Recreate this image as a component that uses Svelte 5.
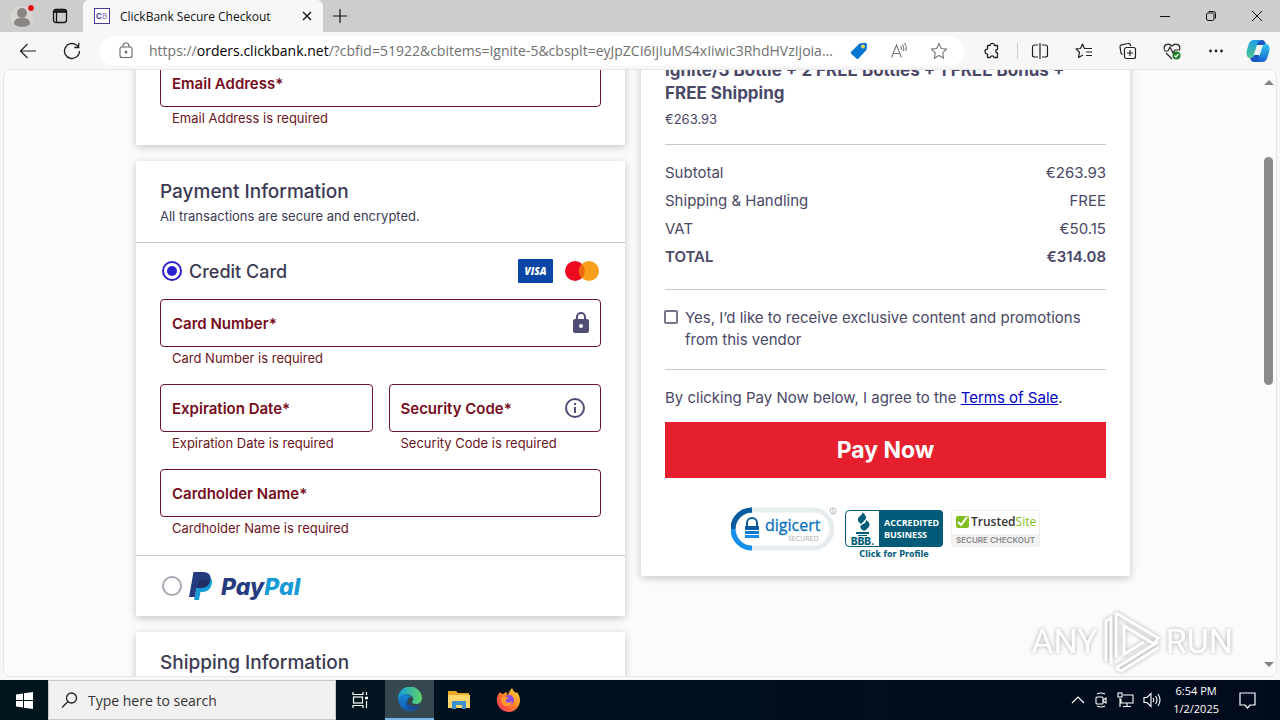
<script>
  let method = $state('card');
  let promotions = $state(false);

  const totals = [
    { label: 'Subtotal', value: '€263.93' },
    { label: 'Shipping & Handling', value: 'FREE' },
    { label: 'VAT', value: '€50.15' },
    { label: 'TOTAL', value: '€314.08', strong: true }
  ];
</script>

{#snippet field(id, label, icon)}
  <div class="field">
    <div class="box">
      <label for={id}>{label}*</label>
      <input {id} type="text" aria-describedby="{id}-error" />
      {#if icon === 'lock'}
        <svg class="lock" width="24" height="24" viewBox="0 0 24 24"><path fill="#504d75" d="M18 8h-1V6A5 5 0 0 0 7 6v2H6a2 2 0 0 0-2 2v10c0 1.100.9 2 2 2h12a2 2 0 0 0 2-2V10a2 2 0 0 0-2-2ZM9 6a3 3 0 0 1 6 0v2H9V6Zm3 11a2 2 0 1 1 0-4 2 2 0 0 1 0 4Z" /></svg>
      {:else if icon === 'info'}
        <svg class="info" width="24" height="24" viewBox="0 0 24 24"><path fill="#504d75" d="M11 7h2v2h-2zm0 4h2v6h-2zm1-9a10 10 0 1 0 0 20 10 10 0 0 0 0-20Zm0 18a8 8 0 1 1 0-16 8 8 0 0 1 0 16Z" /></svg>
      {/if}
    </div>
    <p class="error" id="{id}-error">{label} is required</p>
  </div>
{/snippet}

<div class="window">
  <header class="titlebar">
    <button class="profile" aria-label="Profile">
      <svg width="26" height="28" viewBox="0 0 26 28"><circle cx="11" cy="15" r="11" fill="#d9d5d1" /><circle cx="11" cy="11" r="5" fill="#898785" /><path d="M3 22c0-5 3-6 8-6s8 1 8 6c-3 4-13 4-16 0Z" fill="#898785" /><circle cx="20" cy="6" r="3.500" fill="#e10b13" stroke="#ddd" /></svg>
    </button>
    <button class="tabmenu" aria-label="Tab actions">
      <svg width="16" height="16" viewBox="0 0 16 16" fill="none" stroke="#111" stroke-width="1.300"><rect x="1.500" y="1.500" width="13" height="13" rx="2.500" /><path d="M1.500 3.500h13" stroke-width="2.500" /><path d="M4.500 4v10" /></svg>
    </button>
    <div class="tab">
      <svg width="16" height="16" viewBox="0 0 16 16"><rect x=".5" y=".5" width="15" height="15" fill="#fff" stroke="#4a3b9a" /><text x="2" y="11" font-family="Inter, sans-serif" font-size="8" font-weight="700" fill="#4a3b9a">C<tspan fill="#aaa5c9">B</tspan></text></svg>
      <span>ClickBank Secure Checkout</span>
      <button class="close" aria-label="Close tab"><svg width="10" height="10" viewBox="0 0 10 10"><path d="m1 1 8 8M9 1 1 9" stroke="#111" stroke-width="1.300" /></svg></button>
    </div>
    <button class="newtab" aria-label="New tab"><svg width="14" height="14" viewBox="0 0 14 14"><path d="M7 0v14M0 7h14" stroke="#111" stroke-width="1.200" /></svg></button>
    <div class="controls">
      <button aria-label="Minimize"><svg width="10" height="10" viewBox="0 0 10 10"><path d="M0 5.500h10" stroke="#111" /></svg></button>
      <button aria-label="Restore"><svg width="10" height="10" viewBox="0 0 10 10" fill="none" stroke="#111"><rect x=".5" y="2" width="7.500" height="7.500" rx="1.500" /><path d="M2.500.5h5a2 2 0 0 1 2 2v5" /></svg></button>
      <button aria-label="Close"><svg width="10" height="10" viewBox="0 0 10 10"><path d="m0 0 10 10M10 0 0 10" stroke="#111" /></svg></button>
    </div>
  </header>

  <nav class="toolbar">
    <button class="back" aria-label="Back"><svg width="18" height="16" viewBox="0 0 18 16" fill="none" stroke="#222" stroke-width="1.200"><path d="M17 8H2M8.500 1 1.500 8l7 7" /></svg></button>
    <button class="reload" aria-label="Refresh"><svg width="18" height="18" viewBox="0 0 18 18" fill="none" stroke="#222" stroke-width="1.300"><path d="M16.500 9A7.500 7.500 0 1 1 13.500 3l2 2M15.700 1v4.500h-4.500" /></svg></button>
    <div class="address">
      <svg width="14" height="17" viewBox="0 0 14 17" fill="none" stroke="#666" stroke-width="1.100"><rect x="1" y="5" width="12" height="10.500" rx="2" /><path d="M4 5V4a3 3 0 0 1 6 0v1" /><circle cx="7" cy="10.200" r=".8" fill="#666" /></svg>
      <button class="url">https://<b>orders.clickbank.net</b>/?cbfid=51922&amp;cbitems=Ignite-5&amp;cbsplt=eyJpZCI6IjIuMS4xIiwic3RhdHVzIjoiaW5hY3RpdmUifQ</button>
      <button aria-label="Shopping"><svg width="18" height="18" viewBox="0 0 18 18"><path d="M9.500 1.500 15 .8a2 2 0 0 1 2 2L16.500 8l-8 8.500a1.500 1.500 0 0 1-2.100 0L1.200 11.800a1.500 1.500 0 0 1 0-2.100Z" fill="#0875d1" /><circle cx="13" cy="4.500" r="2" fill="#e8d35f" /></svg></button>
      <button aria-label="Read aloud"><svg width="18" height="18" viewBox="0 0 18 18" fill="none" stroke="#777" stroke-width="1.100"><path d="M1.500 15.500 6.500 3l5 12.500M3.200 11.500h6.600M10.500 4q1.500 2 .6 4M12.300 2.500q2.400 3 1 6.500M14.400 1q3.200 4 1.200 8" /></svg></button>
      <button aria-label="Add to favourites"><svg width="18" height="18" viewBox="0 0 18 18" fill="none" stroke="#777" stroke-width="1.100" stroke-linejoin="round"><path d="m9 1.500 2.300 5 5.300.6-3.900 3.700 1 5.400L9 13.500l-4.700 2.700 1-5.400-3.900-3.700 5.300-.6Z" /></svg></button>
    </div>
    <div class="tools">
      <button aria-label="Extensions"><svg width="18" height="18" viewBox="0 0 18 18" fill="none" stroke="#222" stroke-width="1.300" stroke-linejoin="round"><path d="M4.500 3.500h2.700a2.100 2.100 0 0 1 4.200 0h3.100v4a1.600 1.600 0 1 0 0 3.500v4.500h-3.400a2 2 0 0 0-3.900 0H4.500v-3.400a2.500 2.500 0 1 1 0-5Z" /></svg></button>
      <i class="divider"></i>
      <button aria-label="Split screen"><svg width="18" height="18" viewBox="0 0 18 18" fill="none" stroke="#222" stroke-width="1.200"><path d="M7 3H3.500A2 2 0 0 0 1.500 5v8a2 2 0 0 0 2 2H7M11 3h3.500a2 2 0 0 1 2 2v8a2 2 0 0 1-2 2H11M9 1v16" /></svg></button>
      <button aria-label="Favourites"><svg width="18" height="18" viewBox="0 0 18 18" fill="none" stroke="#222" stroke-width="1.200" stroke-linejoin="round"><path d="M13 6.500H9.500l-2-4.500-2 4.500-4.500.4 3.500 3.300-1 5.300L8 13M11 6.500h6M11 10h6M11 13.500h6" /></svg></button>
      <button aria-label="Collections"><svg width="18" height="18" viewBox="0 0 18 18" fill="none" stroke="#222" stroke-width="1.200"><rect x="5.500" y="5.500" width="11" height="11" rx="2" /><path d="M11 8v6M8 11h6M3.500 12.500A2 2 0 0 1 2 11L1 5a2 2 0 0 1 1.500-2.200L9 1.500a2 2 0 0 1 2.500 1.500l.2 1" /></svg></button>
      <button aria-label="Browser essentials"><svg width="18" height="18" viewBox="0 0 18 18" fill="none" stroke="#222" stroke-width="1.200"><path d="M1.500 8C-.2 3 5 0 9 4c4-4 9.200-1 7.500 4M3 11l6 6M1 9h4l2-4 3 6 2-3h5" /><circle cx="13.500" cy="13.500" r="4" fill="#188020" stroke="none" /><path d="m11.500 13.500 1.500 1.500 2.500-3" stroke="#fff" /></svg></button>
      <button aria-label="Settings and more"><svg width="18" height="18" viewBox="0 0 18 18" fill="#222"><circle cx="3.500" cy="9" r="1.400" /><circle cx="9" cy="9" r="1.400" /><circle cx="14.500" cy="9" r="1.400" /></svg></button>
      <button aria-label="Copilot"><svg width="24" height="24" viewBox="0 0 24 24"><defs><linearGradient id="cop" x2="0" y2="1"><stop stop-color="#1b9ce8" /><stop offset="1" stop-color="#4cc98b" /></linearGradient><linearGradient id="cop2" x2="0" y2="1"><stop stop-color="#35c7ee" /><stop offset="1" stop-color="#1460d2" /></linearGradient></defs><path d="M16 1q3 0 4 5h-9L8 2Z" fill="#1757c4" /><path d="M8 1h6q-2 1-3 5L8 15q-1 4-4 4-3 0-3.500-4Q.3 12 1.500 9L3 4.500Q4.500 1 8 1Z" fill="url(#cop)" /><path d="M16 23H8q-3 0-4-4 3 0 4-3h5Z" fill="#1757c4" /><path d="M16 23h-6q2-1 3-5l3-9q1-4 4-4 3 0 3.500 4 .2 3-1 6L21 19.500Q19.500 23 16 23Z" fill="url(#cop2)" /></svg></button>
    </div>
  </nav>

  <div class="frame">
    <main>
      <div class="columns">
        <section class="column">
          <div class="card contact">{@render field('email', 'Email Address')}</div>

          <div class="card">
            <div class="heading">
              <h2>Payment Information</h2>
              <p>All transactions are secure and encrypted.</p>
            </div>
            <div class="method">
              <input id="pay-card" type="radio" name="method" value="card" bind:group={method} />
              <label for="pay-card">Credit Card</label>
              <span class="brands">
                <svg width="35" height="24" viewBox="0 0 35 24"><rect width="35" height="24" rx="1" fill="#0b45a5" /><text x="17.500" y="16" text-anchor="middle" font-family="Open Sans, sans-serif" font-size="10" font-weight="800" font-style="italic" fill="#fff">VISA</text></svg>
                <svg width="34" height="20" viewBox="0 0 34 20"><circle cx="10" cy="10" r="10" fill="#eb0a1e" /><circle cx="24" cy="10" r="10" fill="#f79e1b" /><path d="M17 2.900a10 10 0 0 1 0 14.200 10 10 0 0 1 0-14.200Z" fill="#f26a0f" /></svg>
              </span>
            </div>
            <div class="fields">
              {@render field('number', 'Card Number', 'lock')}
              <div class="pair">
                {@render field('expiry', 'Expiration Date')}
                {@render field('code', 'Security Code', 'info')}
              </div>
              {@render field('holder', 'Cardholder Name')}
            </div>
            <div class="method paypal">
              <input id="pay-paypal" type="radio" name="method" value="paypal" bind:group={method} />
              <label for="pay-paypal" aria-label="PayPal">
                <svg width="118" height="30" viewBox="0 0 118 30"><path d="M10 6h11q3 3 1.500 8-2 7-9 7h-2L10 29H5Z" fill="#179bd7" /><path d="M4.500 1H14q8 0 7.500 7-1 9-10.500 9H7.500L5.700 26H0Z" fill="#253b80" /><path d="M10 9h11q-1 8-10 8H8.500Z" fill="#222d65" /><text x="32" y="24" font-family="Inter, sans-serif" font-size="23" font-weight="800" font-style="italic" fill="#253b80">Pay<tspan fill="#179bd7">Pal</tspan></text></svg>
              </label>
            </div>
          </div>

          <div class="card"><div class="heading"><h2>Shipping Information</h2></div></div>
        </section>

        <aside class="column">
          <div class="card summary">
            <div class="product">
              <h3>Ignite/3 Bottle + 2 FREE Bottles + 1 FREE Bonus + FREE Shipping</h3>
              <p>€263.93</p>
            </div>
            <dl>
              {#each totals as row}
                <div class:strong={row.strong}><dt>{row.label}</dt><dd>{row.value}</dd></div>
              {/each}
            </dl>
            <div class="consent">
              <input id="promo" type="checkbox" bind:checked={promotions} />
              <label for="promo">Yes, I’d like to receive exclusive content and promotions from this vendor</label>
            </div>
            <p class="terms">By clicking Pay Now below, I agree to the <a href="#terms">Terms of Sale</a>.</p>
            <button class="pay">Pay Now</button>
            <div class="badges">
              <svg width="106" height="44" viewBox="0 0 106 44"><rect x="3" y="3" width="98" height="38" rx="19" fill="#fff" stroke="#e7edef" stroke-width="5" /><path d="M21 3a19 19 0 0 0 0 38" fill="none" stroke="#1590ea" stroke-width="5" /><path d="M21 3A19 19 0 0 0 2 22" fill="none" stroke="#075c9f" stroke-width="5" /><path d="M16 20v-4a5 5 0 0 1 10 0v4" fill="none" stroke="#075c9f" stroke-width="2" /><path d="M14 19h14v4H14Z" fill="#075c9f" /><path d="M14 24h14v3H14Z" fill="#0878c9" /><path d="M14 28h14v3H14Z" fill="#168ff0" /><text x="34" y="24" font-family="Open Sans, sans-serif" font-size="16" fill="#0871bd" stroke="#0871bd" stroke-width=".3">digicert</text><text x="57" y="34" font-family="Open Sans, sans-serif" font-size="7" fill="#aaa">SECURED</text><circle cx="102" cy="4" r="3" fill="none" stroke="#bbb" /><path d="M102 2v4" stroke="#bbb" /></svg>
              <svg width="98" height="50" viewBox="0 0 98 50"><rect x=".5" y=".5" width="97" height="36" rx="4" fill="#fff" stroke="#015b78" /><path d="M34 0h60a4 4 0 0 1 4 4v29a4 4 0 0 1-4 4H34Z" fill="#015b78" /><path d="M17 2q7 5 2 9l-3 3q-6-4-1-8Q18 4 17 2ZM21 10q8 5-2 11-7-4-1-7 3-1 3-4ZM11 22h13v2H11ZM13 25h9v1h-9Z" fill="#015b78" /><text x="6" y="35" font-family="Inter, sans-serif" font-size="10" font-weight="800" fill="#015b78">BBB.</text><g font-family="Open Sans, sans-serif" font-size="9" font-weight="700" fill="#fff"><text x="39" y="16">ACCREDITED</text><text x="39" y="28">BUSINESS</text></g><text x="49" y="47" text-anchor="middle" font-family="DejaVu Sans, sans-serif" font-size="8" font-weight="700" fill="#015b78">Click for Profile</text></svg>
              <svg width="89" height="37" viewBox="0 0 89 37"><rect x=".5" y=".5" width="88" height="36" rx="2" fill="#fff" stroke="#eee" /><path d="M1 24h87v12H1Z" fill="#f2f2f2" /><rect x="5" y="6" width="13" height="12" rx="2" fill="#82bd20" /><path d="m7 12 3 3 6-8" fill="none" stroke="#fff" stroke-width="2" /><text x="20" y="16" font-family="Open Sans, sans-serif" font-size="12" font-weight="600" fill="#333">Trusted<tspan font-weight="400" fill="#82bd20">Site</tspan></text><text x="5" y="33" font-family="Inter, sans-serif" font-size="8" font-weight="600" fill="#888">SECURE CHECKOUT</text></svg>
            </div>
          </div>
        </aside>
      </div>
    </main>
    <div class="scrollbar"><i class="up"></i><i class="thumb"></i><i class="down"></i></div>
    <div class="watermark">
      <span>ANY</span>
      <svg width="60" height="64" viewBox="0 0 60 64" fill="none" stroke="#fff" stroke-width="3"><path d="M4 52V12l5-3v46M14 4v44M14 4l42 25-4 6-30-18v28l20-12M14 59l42-26M14 59l5 3 38-24" /></svg>
      <span>RUN</span>
    </div>
  </div>

  <footer class="taskbar">
    <button class="start" aria-label="Start"><svg width="17" height="17" viewBox="0 0 17 17" fill="#fff"><path d="m0 2.500 7-1V8H0ZM8 1.300 17 0v8H8ZM0 9h7v6.500l-7-1ZM8 9h9v8l-9-1.300Z" /></svg></button>
    <label class="search"><svg width="17" height="17" viewBox="0 0 17 17" fill="none" stroke="#222" stroke-width="1.300"><circle cx="10.500" cy="6" r="5" /><path d="m7 9.500-6 6" /></svg><input type="text" placeholder="Type here to search" aria-label="Search" /></label>
    <button class="app" aria-label="Task view"><svg width="17" height="16" viewBox="0 0 17 16" fill="none" stroke="#fff" stroke-width="1.200"><path d="M1 0v2.500h10V0M1 16v-2.500h10V16M14.500 0v3M14.500 9v7" /><rect x="1.500" y="5" width="9" height="6" /><path d="M13 6h3" stroke-width="2.500" /></svg></button>
    <button class="app active" aria-label="Edge"><svg width="24" height="24" viewBox="0 0 24 24"><defs><linearGradient id="edge-top"><stop stop-color="#149fdc" /><stop offset="1" stop-color="#60d467" /></linearGradient><linearGradient id="edge-low" x2="0" y2="1"><stop stop-color="#1787d5" /><stop offset="1" stop-color="#1459ae" /></linearGradient></defs><path d="M0 12A12 12 0 0 1 24 11c0 4-3 6-6 6s-4-1-4-2 2-1 1-4C13 6 4 6 0 12Z" fill="url(#edge-top)" /><path d="M0 12c2-6 11-6 13-2-5 0-6 10 2 12q4 1 6-2-4 5-10 4A12 12 0 0 1 0 12Z" fill="url(#edge-low)" /><path d="M9 13c0 6 7 8 13 5-3 7-14 7-14-1Z" fill="#164e9d" /></svg></button>
    <button class="app" aria-label="File Explorer"><svg width="22" height="20" viewBox="0 0 22 20"><path d="M0 1h8l2 2h11v15H0Z" fill="#e9a928" /><path d="M0 5h22v13H0Z" fill="#ffd66a" /><path d="M4 19v-8h14v8h-4v-4H8v4Z" fill="#3a91cc" /></svg></button>
    <button class="app" aria-label="Firefox"><svg width="24" height="24" viewBox="0 0 24 24"><defs><linearGradient id="fox" x1="1" x2="0" y2="1"><stop stop-color="#ffe43b" /><stop offset=".5" stop-color="#ff7e28" /><stop offset="1" stop-color="#f02469" /></linearGradient></defs><path d="M4 4q1 2 3 2 2-2 4-2-1 2 1 3 1-4 4-7 1 3 4 5l1-1q3 4 3 8A11 11 0 0 1 1 13Q0 8 4 4Z" fill="url(#fox)" /><circle cx="13" cy="12" r="5" fill="#8a4be3" /><path d="M5 10q4-3 8 0-4 1-3 4 3 2 6-1-1 6-7 5-4-2-4-8Z" fill="#ff9d2b" /></svg></button>
    <div class="tray">
      <svg width="14" height="14" viewBox="0 0 14 14" fill="none" stroke="#fff" stroke-width="1.200"><path d="m1 10 6-6 6 6" /></svg>
      <svg width="14" height="16" viewBox="0 0 14 16" fill="none" stroke="#fff" stroke-width="1.100"><rect x="2" y="5" width="7" height="7" rx="1" /><path d="m9 8 3-2v5l-3-2M3 2q4-2 8 0M3 14q4 2 8 0" /></svg>
      <svg width="17" height="16" viewBox="0 0 17 16" fill="none" stroke="#fff" stroke-width="1.100"><path d="M6 3h10v8H4V7M10 11v4M6 14.500h8M3 6v9" /><rect x="1" y="1" width="4" height="4" /></svg>
      <svg width="18" height="16" viewBox="0 0 18 16" fill="none" stroke="#fff" stroke-width="1.100"><path d="M1 5.500h3l4-4v13l-4-4H1ZM10 6q1.500 2 0 4M12.500 4q3 4 0 8M15 2q4 6 0 12" /></svg>
      <time><span>6:54 PM</span><span>1/2/2025</span></time>
      <svg class="notice" width="17" height="17" viewBox="0 0 17 17" fill="none" stroke="#fff" stroke-width="1.200"><path d="M1 1h15v12h-5l-2.500 3L6 13H1Z" /></svg>
    </div>
  </footer>
</div>

<style>
  :global(body) { margin: 0; }
  * { box-sizing: border-box; }
  p, h2, h3, dl, dd { margin: 0; }
  button { border: 0; padding: 0; background: none; font: inherit; color: inherit; display: flex; align-items: center; justify-content: center; }
  svg { display: block; flex: none; }
  .window { height: 100vh; display: flex; flex-direction: column; overflow: hidden; background: #f7f7f7; font-family: "Open Sans", sans-serif; }

  .titlebar { height: 32px; flex: none; display: flex; background: #cdcdcd; }
  .profile { width: 48px; }
  .tabmenu { width: 24px; }
  .tab { width: 240px; margin-left: 11px; padding: 0 11px; display: flex; align-items: center; gap: 10px; background: #f7f7f7; border-radius: 6px 6px 0 0; font-size: 12px; color: #111; white-space: nowrap; }
  .close { margin-left: auto; }
  .newtab { width: 34px; }
  .controls { margin-left: auto; display: flex; }
  .controls button { width: 46px; }

  .toolbar { height: 37px; flex: none; display: flex; align-items: center; }
  .back { width: 56px; }
  .reload { width: 32px; }
  .address { flex: 1; min-width: 0; height: 30px; margin-left: 12px; padding: 0 16px 0 19px; display: flex; align-items: center; gap: 22px; background: #fff; border-radius: 15px; }
  .url { display: block; flex: 1; min-width: 0; margin: 0 -7px 0 -6px; overflow: hidden; text-overflow: ellipsis; white-space: nowrap; text-align: left; font-size: 14px; color: #707070; }
  .url b { font-weight: 400; color: #000; }
  .tools { display: flex; align-items: center; gap: 26px; padding: 0 10px 0 19px; }
  .tools button:last-child { margin-left: -5px; }
  .divider { width: 1px; height: 16px; margin: 0 -13px 0 -10px; background: #ccc; }

  .frame { position: relative; flex: 1; min-height: 0; display: flex; margin: 0 3px 3px; border: 1px solid #e6e6e6; border-radius: 8px; overflow: hidden; background: #fbfbfb; }
  main { flex: 1; min-width: 0; overflow: hidden; font-family: Inter, sans-serif; color: #4a4866; }
  .columns { max-width: 994px; margin: -35px auto 0; display: grid; grid-template-columns: 1fr 1fr; gap: 16px; align-items: start; }
  .column { display: grid; gap: 16px; min-width: 0; }
  .card { background: #fff; box-shadow: 0 2px 8px rgb(0 0 0 / 22%); }
  .contact { padding: 24px 24px 1px; }
  .heading { padding: 19px 24px 14px; }
  h2 { font-size: 19px; line-height: 24px; font-weight: 500; color: #3c3a52; }
  .heading p { font-size: 13px; line-height: 24px; color: #3c3a52; }
  .method { height: 57px; padding: 0 26px; display: flex; align-items: center; border-top: 1px solid #c8c8c8; font-size: 18px; font-weight: 500; color: #3c3a52; }
  .method input { appearance: none; width: 20px; height: 20px; margin: 0 7px 0 0; padding: 3px; border: 2px solid #a9a8b2; border-radius: 50%; }
  .method input:checked { border-color: #2a20d0; background: #2a20d0 content-box; }
  .brands { margin-left: auto; display: flex; align-items: center; gap: 12px; }
  .paypal { height: 61px; }
  .fields { padding: 0 24px 1px; }
  .pair { display: grid; grid-template-columns: 1fr 1fr; gap: 16px; }
  .box { height: 48px; display: flex; align-items: center; padding: 0 7px 0 11px; border: 1px solid #6d1430; border-radius: 4px; }
  .box label { font-size: 15px; font-weight: 600; color: #760c20; white-space: nowrap; }
  .box input { flex: 1; width: 0; min-width: 0; border: 0; outline: 0; background: none; font: inherit; }
  .info { margin-right: 6px; }
  .error { padding: 0 12px 15px; font-size: 13px; line-height: 22px; color: #6b1523; }

  .summary { padding: 24px 24px 16px; }
  .product { padding-bottom: 11px; }
  h3 { font-size: 17px; line-height: 23px; font-weight: 700; color: #4b4868; }
  .product p { font-size: 13px; line-height: 28px; }
  dl { padding: 14px 0 18px; border: solid #c8c8c8; border-width: 1px 0; font-size: 15px; line-height: 28px; }
  dl div { display: flex; justify-content: space-between; }
  .strong { font-weight: 600; }
  .consent { display: flex; align-items: flex-start; gap: 7px; padding: 17px 0 18px; border-bottom: 1px solid #c8c8c8; font-size: 15px; line-height: 22px; }
  .consent input { appearance: none; flex: none; width: 14px; height: 14px; margin: 3px 0 0 -1px; border: 2px solid #77758b; border-radius: 2px; background: #fff; }
  .consent input:checked { background: #2a20d0; }
  .terms { padding: 16px 0 12px; font-size: 15px; line-height: 24px; }
  .terms a { color: #0000c8; }
  .pay { width: 100%; height: 56px; background: #e51f2e; color: #fff; font-size: 23px; font-weight: 700; }
  .badges { display: flex; justify-content: center; align-items: flex-start; gap: 8px; padding-top: 29px; }
  .badges svg:nth-child(n + 2) { margin-top: 3px; }

  .scrollbar { width: 14px; flex: none; display: flex; flex-direction: column; align-items: center; padding: 10px 1px 9px 0; }
  .up, .down { border: 5px solid transparent; border-top: 0; border-bottom: 5px solid #858585; }
  .down { margin-top: auto; border-top: 5px solid #858585; border-bottom: 0; }
  .thumb { width: 9px; height: 228px; margin-top: 72px; border-radius: 5px; background: #8b8b8b; }
  .watermark { position: absolute; right: 43px; bottom: 3px; display: flex; align-items: center; gap: 4px; font: 34px Roboto, sans-serif; color: #fff; filter: drop-shadow(0 0 2px rgb(0 0 0 / 40%)); opacity: .8; pointer-events: none; }

  .taskbar { height: 40px; flex: none; display: flex; background: linear-gradient(90deg, #00161f, #020b1c); }
  .start { width: 48px; }
  .search { width: 288px; padding: 0 12px; display: flex; align-items: center; gap: 10px; background: #f1f1f1; border: 1px solid #c9c9c9; }
  .search input { flex: 1; min-width: 0; padding: 0; border: 0; outline: 0; background: none; font: 14px "Open Sans", sans-serif; color: #222; }
  .search input::placeholder { color: #333; opacity: 1; }
  .app { width: 49px; }
  .app.active { background: #354850; border-bottom: 2px solid #78b8e8; }
  .tray { margin-left: auto; display: flex; align-items: center; gap: 9px; padding-right: 24px; color: #fff; }
  time { display: flex; flex-direction: column; align-items: center; margin-left: 3px; font-size: 11px; line-height: 18px; }
  .notice { margin-left: 11px; }
</style>
